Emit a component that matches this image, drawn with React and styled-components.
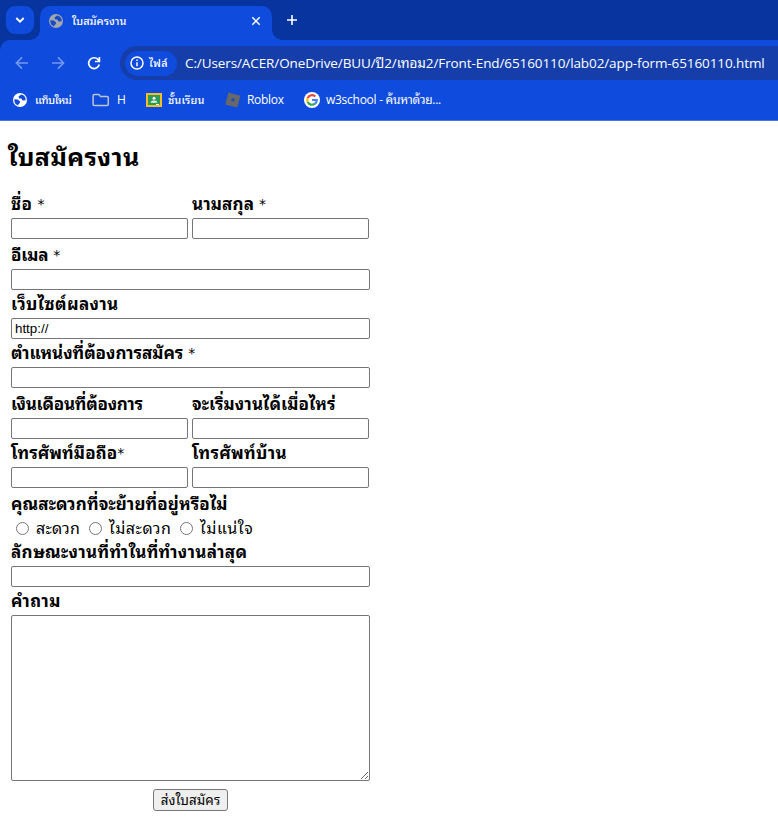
import React from "react";
import styled, { createGlobalStyle } from "styled-components";

const GlobalStyle = createGlobalStyle`
  * { box-sizing: border-box; }
  body { margin: 0; background: #fff; overflow: hidden; }
`;

const chromeFont = `"Open Sans", "Noto Sans", "Noto Sans Thai Looped", "Noto Looped Thai", "Loma", "Noto Sans Thai", sans-serif`;
const pageFont = `"Noto Sans Thai Looped", "Noto Looped Thai", "Loma", "Noto Sans Thai", "DejaVu Sans", sans-serif`;

const Window = styled.div`
  width: 778px;
  height: 822px;
  overflow: hidden;
  background: #fff;
  color: #000;
  font-family: ${pageFont};
`;
const TabStrip = styled.header`
  display: flex;
  height: 40px;
  padding: 6px 0 0 6px;
  background: #07349e;
  color: #fff;
`;
const TabSearch = styled.button`
  display: grid;
  place-items: center;
  width: 28px;
  height: 28px;
  padding: 0;
  border: 0;
  border-radius: 9px;
  background: #0f4bdc;
  color: #fff;
`;
const Tab = styled.div`
  position: relative;
  display: flex;
  align-items: center;
  width: 232px;
  height: 34px;
  margin-left: 6px;
  padding: 0 10px 5px 9px;
  border-radius: 10px 10px 0 0;
  background: #0f4bdc;
  &::before, &::after {
    content: "";
    position: absolute;
    bottom: 0;
    width: 10px;
    height: 10px;
  }
  &::before { left: -10px; background: radial-gradient(circle at 0 0, transparent 9.5px, #0f4bdc 10px); }
  &::after { right: -10px; background: radial-gradient(circle at 100% 0, transparent 9.5px, #0f4bdc 10px); }
`;
const TabTitle = styled.div`
  flex: 1;
  margin-left: 9px;
`;
const NewTab = styled.div`
  margin: 7px 0 0 14px;
  height: 14px;
  display: flex;
`;
const Toolbar = styled.nav`
  display: flex;
  height: 40px;
  padding: 6px 0 0 15px;
  border-radius: 10px 0 0 0;
  background: #0f4bdc;
`;
const ToolbarShell = styled.div`
  background: #07349e;
`;
const NavIcons = styled.div`
  display: flex;
  flex: none;
  align-items: center;
  gap: 22px;
  width: 105px;
  height: 34px;
`;
const Omnibox = styled.div`
  display: flex;
  align-items: center;
  flex: 1;
  min-width: 0;
  height: 34px;
  padding-left: 5px;
  border-radius: 17px 0 0 17px;
  background: #153eab;
`;
const FileChip = styled.div`
  display: flex;
  flex: none;
  align-items: center;
  gap: 5px;
  width: 52px;
  height: 25px;
  padding-left: 5px;
  border-radius: 13px;
  background: #0f4bdc;
`;
const Address = styled.div`margin-left: 8px;`;
const Bookmarks = styled.nav`
  display: flex;
  align-items: center;
  height: 41px;
  padding: 0 0 1px 13px;
  border-bottom: 1px solid #4a76d8;
  background: #0f4bdc;
`;
const Bookmark = styled.div`
  display: flex;
  align-items: center;
  gap: ${(p) => p.$gap}px;
  width: ${(p) => p.$width}px;
`;
const ChromeText = styled.span`
  display: block;
  color: #fff;
  font: ${(p) => p.$weight || 400} ${(p) => p.$size || 12}px/20px ${chromeFont};
  letter-spacing: ${(p) => p.$track || 0}px;
  white-space: nowrap;
`;
const Content = styled.main`padding: 0 8px;`;
const Heading = styled.h2`
  height: 69px;
  margin: 0;
  padding-top: 16px;
  font-size: 25px;
  line-height: 36px;
  font-weight: 700;
  letter-spacing: ${(p) => p.$track || 0}px;
  white-space: nowrap;
`;
const Form = styled.form`
  width: 359px;
  margin-left: 3px;
`;
const Row = styled.div`
  display: flex;
  gap: 4px;
`;
const Field = styled.label`
  display: block;
  width: ${(p) => (p.$half ? 177 : 359)}px;
`;
const Caption = styled.span`
  display: flex;
  align-items: flex-end;
  height: ${(p) => (p.$tall ? 30 : 28)}px;
  font-size: 17px;
  line-height: 30px;
  font-weight: 700;
  white-space: nowrap;
  letter-spacing: ${(p) => p.$track || 0}px;
`;
const Star = styled.span`
  margin-left: ${(p) => (p.$tight ? 0 : 5)}px;
  font-family: "DejaVu Sans", sans-serif;
  font-size: 14px;
  line-height: 28px;
  font-weight: 400;
  letter-spacing: 0;
`;
const Input = styled.input`
  display: block;
  width: 100%;
  height: 21px;
  padding: 1px 3px;
  border: 1px solid #767676;
  border-radius: 2px;
  background: #fff;
  color: #000;
  font: 13.333px "Liberation Sans", Arial, sans-serif;
`;
const Choices = styled.div`
  display: flex;
  align-items: center;
  height: 20px;
`;
const Choice = styled.label`
  display: flex;
  align-items: center;
  width: ${(p) => p.$width}px;
  font-size: 16px;
  line-height: 18px;
  white-space: nowrap;
  letter-spacing: ${(p) => p.$track || 0}px;
`;
const ChoiceText = styled.span`padding-bottom: 2px;`;
const Radio = styled.input`
  flex: none;
  width: 13px;
  height: 13px;
  margin: 0 7px 0 5px;
`;
const TextArea = styled.textarea`
  display: block;
  width: 359px;
  height: 166px;
  border: 1px solid #767676;
  border-radius: 2px;
  resize: both;
`;
const Submit = styled.button`
  display: block;
  width: 75px;
  height: 22px;
  margin: 8px 0 0 142px;
  padding: 0 0 2px;
  border: 1px solid #767676;
  border-radius: 3px;
  background: #efefef;
  color: #000;
  font: 13.333px/18px ${pageFont};
  letter-spacing: ${(p) => p.$track || 0}px;
  white-space: nowrap;
`;

const Globe = ({ disc, land }) => (
  <svg width="14" height="14" viewBox="0 0 14 14">
    <circle cx="7" cy="7" r="7" fill={disc} />
    <path d="M1.4 6.2 4.6 6.4 6.9 8.2V10L5.3 11.2V12.5A5.8 5.8 0 0 1 1.4 6.2ZM8.2 1.4 5.5 3.6 6.2 5.4H8.4L9.6 7.5 12.7 7.3A5.8 5.8 0 0 0 8.2 1.4Z" fill={land} />
  </svg>
);
const Arrow = ({ right }) => (
  <svg width="14" height="14" viewBox="0 0 14 14" fill="none" stroke="#7398f0" strokeWidth="1.6">
    {right ? <path d="M1 7h11M7 1.4 12.6 7 7 12.6" /> : <path d="M13 7H2M7 1.4 1.4 7 7 12.6" />}
  </svg>
);

const Labelled = ({ text, star, tight, half, tall, track, value }) => (
  <Field $half={half}>
    <Caption $tall={tall} $track={track}>{text}{star && <Star $tight={tight}>*</Star>}</Caption>
    <Input defaultValue={value} />
  </Field>
);

export default function App() {
  return (
    <Window>
      <GlobalStyle />
      <TabStrip>
        <TabSearch aria-label="tabs">
          <svg width="10" height="8" viewBox="0 0 10 8" fill="none" stroke="#fff" strokeWidth="1.8"><path d="m1.3 2 3.7 3.7L8.7 2" /></svg>
        </TabSearch>
        <Tab>
          <Globe disc="#a2a6ad" land="#174bc5" />
          <TabTitle><ChromeText $size={11} $weight={500}>ใบสมัครงาน</ChromeText></TabTitle>
          <svg width="12" height="12" viewBox="0 0 12 12" fill="none" stroke="#fff" strokeWidth="1.5"><path d="m2.3 2.3 7.4 7.4m0-7.4L2.3 9.7" /></svg>
        </Tab>
        <NewTab>
          <svg width="12" height="14" viewBox="0 0 12 14" fill="none" stroke="#fff" strokeWidth="1.6"><path d="M6 2v10M1 7h10" /></svg>
        </NewTab>
      </TabStrip>
      <ToolbarShell>
        <Toolbar>
          <NavIcons>
            <Arrow />
            <Arrow right />
            <svg width="14" height="14" viewBox="0 0 14 14" fill="none" stroke="#fff" strokeWidth="1.7"><path d="M12.3 8.6A5.4 5.4 0 1 1 11 3.4L12.2 4.8" /><path d="M12.4 1v4.5H8" /></svg>
          </NavIcons>
          <Omnibox>
            <FileChip>
              <svg width="14" height="14" viewBox="0 0 14 14" fill="none" stroke="#fff" strokeWidth="1.5"><circle cx="7" cy="7" r="6" /><path d="M7 6.2v4M7 3.5v1.5" /></svg>
              <ChromeText $size={11} $weight={500} $track={0.3}>ไฟล์</ChromeText>
            </FileChip>
            <Address><ChromeText $size={13.5} $track={-0.1}>C:/Users/ACER/OneDrive/BUU/ปี2/เทอม2/Front-End/65160110/lab02/app-form-65160110.html</ChromeText></Address>
          </Omnibox>
        </Toolbar>
      </ToolbarShell>
      <Bookmarks>
        <Bookmark $gap={8} $width={79}><Globe disc="#fff" land="#0f4bdc" /><ChromeText $size={11} $weight={500} $track={-0.55}>แท็บใหม่</ChromeText></Bookmark>
        <Bookmark $gap={7} $width={54}>
          <svg width="18" height="14" viewBox="0 0 18 14" fill="none" stroke="#bcc3d4" strokeWidth="1.5"><path d="M2.4 1.5h4.4l1.8 2H15q1.3 0 1.3 1.3v6.4q0 1.3-1.3 1.3H2.4q-1.3 0-1.3-1.3V2.8q0-1.3 1.3-1.3Z" /></svg>
          <ChromeText>H</ChromeText>
        </Bookmark>
        <Bookmark $gap={6} $width={79}>
          <svg width="16" height="14" viewBox="0 0 16 14"><path fill="#f6bd25" d="M0 0h16v14H0z" /><path fill="#2d9b58" d="M2 2h12v10H2z" /><circle cx="8" cy="5.2" r="1.5" fill="#fff" /><path d="M4.7 9.7Q5 7.6 8 7.6t3.3 2.1Z" fill="#e5f5eb" /><path d="M10 12h3v-1h-3Z" fill="#fff" /></svg>
          <ChromeText $size={11} $weight={500} $track={0.1}>ชั้นเรียน</ChromeText>
        </Bookmark>
        <Bookmark $gap={6} $width={79}>
          <svg width="16" height="16" viewBox="0 0 16 16"><path fill="#686868" d="m3.4.6 12 3.1-3.1 11.9-12-3.1Z" /><path fill="#1e4cb8" d="m6.9 6 2.9.7L9 9.6l-2.9-.7Z" /></svg>
          <ChromeText $track={-0.3}>Roblox</ChromeText>
        </Bookmark>
        <Bookmark $gap={6} $width={150}>
          <svg width="16" height="16" viewBox="0 0 16 16" fill="none" strokeWidth="2.2"><circle cx="8" cy="8" r="8" fill="#fff" /><path d="M11.3 4.5A4.8 4.8 0 0 0 3.7 5.9" stroke="#ea4335" /><path d="M3.7 5.9a4.8 4.8 0 0 0 0 4.2" stroke="#fbbc05" /><path d="M3.7 10.1a4.8 4.8 0 0 0 7.3 1.6" stroke="#34a853" /><path d="M11 11.7A4.8 4.8 0 0 0 12.8 8H8" stroke="#4285f4" /></svg>
          <ChromeText $track={-0.27}>w3school - ค้นหาด้วย...</ChromeText>
        </Bookmark>
      </Bookmarks>
      <Content>
        <Heading $track={0.4}>ใบสมัครงาน</Heading>
        <Form>
          <Row><Labelled half text="ชื่อ" star track={0.5} /><Labelled half text="นามสกุล" star track={0.1} /></Row>
          <Labelled tall text="อีเมล" star track={-0.2} />
          <Labelled text="เว็บไซต์ผลงาน" value="http://" track={0.35} />
          <Labelled text="ตำแหน่งที่ต้องการสมัคร" star track={-0.05} />
          <Row><Labelled half tall text="เงินเดือนที่ต้องการ" track={-0.25} /><Labelled half tall text="จะเริ่มงานได้เมื่อไหร่" track={0.1} /></Row>
          <Row><Labelled half text="โทรศัพท์มือถือ" star tight track={0.1} /><Labelled half text="โทรศัพท์บ้าน" track={0.3} /></Row>
          <Caption $tall $track={0.1}>คุณสะดวกที่จะย้ายที่อยู่หรือไม่</Caption>
          <Choices>
            <Choice $width={73} $track={0.2}><Radio type="radio" name="move" /><ChoiceText>สะดวก</ChoiceText></Choice>
            <Choice $width={91} $track={0.5}><Radio type="radio" name="move" /><ChoiceText>ไม่สะดวก</ChoiceText></Choice>
            <Choice $width={85} $track={0.6}><Radio type="radio" name="move" /><ChoiceText>ไม่แน่ใจ</ChoiceText></Choice>
          </Choices>
          <Labelled text="ลักษณะงานที่ทำในที่ทำงานล่าสุด" track={0.3} />
          <Caption $track={0.5}>คำถาม</Caption>
          <TextArea />
          <Submit type="button" $track={0.1}>ส่งใบสมัคร</Submit>
        </Form>
      </Content>
    </Window>
  );
}
